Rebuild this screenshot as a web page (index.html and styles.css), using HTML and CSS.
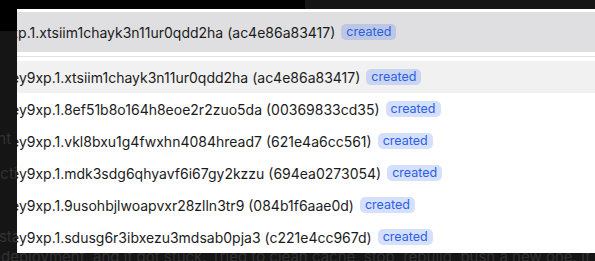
FILE: index.html
```html
<!DOCTYPE html>
<html>
<head>
<meta charset="utf-8">
<link rel="stylesheet" href="styles.css">
</head>
<body>
<div class="page">
  <div class="topbar"><div class="topbar-left"></div></div>
  <div class="content">
    <p class="bg-line l1">Content</p>
    <p class="bg-line l2">Action</p>
    <p class="bg-line l3">Instance</p>
    <p class="bg-line l4">deployment, and it got stuck. Tried to clean cache, stop, rebuild, push a new one. It still happens</p>
  </div>

  <div class="popover">
    <div class="search">
      <span class="search-text">ey9xp.1.xtsiim1chayk3n11ur0qdd2ha (ac4e86a83417)</span>
      <span class="badge">created</span>
    </div>
    <div class="divider"></div>
    <ul class="list">
      <li class="item active"><span class="item-text">ey9xp.1.xtsiim1chayk3n11ur0qdd2ha (ac4e86a83417)</span><span class="badge">created</span></li>
      <li class="item"><span class="item-text">ey9xp.1.8ef51b8o164h8eoe2r2zuo5da (00369833cd35)</span><span class="badge">created</span></li>
      <li class="item"><span class="item-text">ey9xp.1.vkl8bxu1g4fwxhn4084hread7 (621e4a6cc561)</span><span class="badge">created</span></li>
      <li class="item"><span class="item-text">ey9xp.1.mdk3sdg6qhyavf6i67gy2kzzu (694ea0273054)</span><span class="badge">created</span></li>
      <li class="item"><span class="item-text">ey9xp.1.9usohbjlwoapvxr28zlln3tr9 (084b1f6aae0d)</span><span class="badge">created</span></li>
      <li class="item"><span class="item-text">ey9xp.1.sdusg6r3ibxezu3mdsab0pja3 (c221e4cc967d)</span><span class="badge">created</span></li>
    </ul>
  </div>
</div>
</body>
</html>
```
FILE: styles.css
```css
* { box-sizing: border-box; }
html, body { margin: 0; padding: 0; }
body {
  width: 595px;
  height: 261px;
  overflow: hidden;
  background: #151515;
  font-family: Inter, "Noto Sans", sans-serif;
}
.page {
  position: relative;
  width: 595px;
  height: 261px;
  overflow: hidden;
}
.topbar {
  height: 31px;
  display: flex;
}
.topbar-left {
  width: 305px;
  background: #000;
}
.content {
  padding-top: 98px;
}
.bg-line {
  margin: 0;
  color: #323232;
  font-size: 15px;
  line-height: 20px;
  white-space: nowrap;
}
.l1 { text-indent: -45px; }
.l2 { text-indent: -10px; margin-top: 15px; }
.l3 { text-indent: -14px; margin-top: 43px; }
.l4 { text-indent: 1px; margin-top: 0; }

.popover {
  position: absolute;
  left: 17px;
  top: 9px;
  width: 600px;
  height: 244px;
  background: #fff;
  padding-top: 3px;
  overflow: hidden;
}
.search {
  height: 40px;
  background: #dfdfe1;
  display: flex;
  align-items: center;
  gap: 6px;
  white-space: nowrap;
}
.search-text {
  margin-left: -31px;
  font-size: 14px;
  color: #1b1b1b;
}
.divider {
  margin-top: 4px;
  height: 1px;
  background: #e2e2e2;
  margin-bottom: 4px;
}
.list {
  list-style: none;
  margin: 0;
  padding: 0;
}
.item {
  height: 32px;
  display: flex;
  align-items: center;
  gap: 6px;
  white-space: nowrap;
}
.item.active { background: #f1f1f1; }
.item-text {
  margin-left: -6px;
  font-size: 14px;
  color: #1b1b1b;
}
.badge {
  font-size: 12.5px;
  line-height: 16px;
  height: 16px;
  padding: 0 5px;
  border-radius: 5px;
  color: #2a5fe6;
  background: rgba(62, 112, 240, 0.22);
}
```
